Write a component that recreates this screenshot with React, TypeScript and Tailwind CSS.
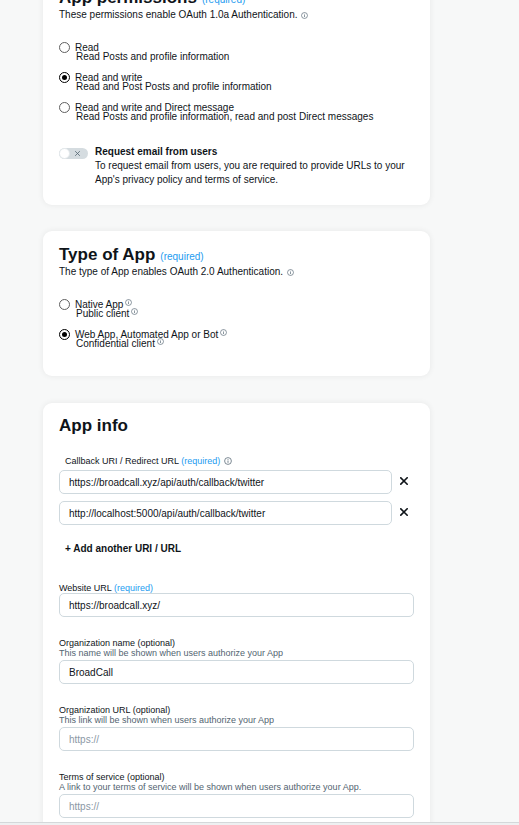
import type { ReactNode } from "react"

function Info({ size = 7 }: { size?: number }) {
  return (
    <svg width={size} height={size} viewBox="0 0 16 16" fill="none" className="shrink-0">
      <circle cx="8" cy="8" r="6.8" stroke="#536471" strokeWidth="1.5" />
      <rect x="7.2" y="7" width="1.6" height="4.6" fill="#536471" />
      <rect x="7.2" y="4.2" width="1.6" height="1.6" fill="#536471" />
    </svg>
  )
}

function Cross({ size = 8, color = "#0f1419", width = 2 }: { size?: number; color?: string; width?: number }) {
  return (
    <svg width={size} height={size} viewBox="0 0 10 10" fill="none" className="shrink-0">
      <path d="M1 1L9 9M9 1L1 9" stroke={color} strokeWidth={width} strokeLinecap="square" />
    </svg>
  )
}

function Radio({
  checked,
  label,
  desc,
  infos,
}: {
  checked?: boolean
  label: string
  desc: string
  infos?: boolean
}) {
  return (
    <div className="flex items-start gap-[5px]">
      <span
        className={
          checked
            ? "-mt-[1px] flex h-[11px] w-[11px] shrink-0 items-center justify-center rounded-full border-[1.5px] border-black bg-white"
            : "-mt-[1px] flex h-[11px] w-[11px] shrink-0 items-center justify-center rounded-full border border-[#5f5f5f] bg-white"
        }
      >
        {checked && <span className="h-[5px] w-[5px] rounded-full bg-black" />}
      </span>
      <div className="text-[10px] leading-[9px] text-[#0f1419]">
        <div className="flex items-start gap-[2px]">
          {label}
          {infos && (
            <span className="-mt-[1px]">
              <Info />
            </span>
          )}
        </div>
        <div className="flex items-start gap-[2px] pl-[1px]">
          {desc}
          {infos && (
            <span className="-mt-[1px]">
              <Info />
            </span>
          )}
        </div>
      </div>
    </div>
  )
}

function Card({ children, className }: { children: ReactNode; className: string }) {
  return (
    <section
      className={
        "w-[387px] rounded-[9px] bg-white px-4 shadow-[0_0_6px_rgba(0,0,0,0.07)] " + className
      }
    >
      {children}
    </section>
  )
}

function Heading({ title, required }: { title: string; required?: boolean }) {
  return (
    <div className="flex items-baseline gap-[5px]">
      <h2 className="text-[17px] font-bold leading-[20px] text-[#0f1419]">{title}</h2>
      {required && <span className="text-[10px] text-[#1d9bf0]">(required)</span>}
    </div>
  )
}

function Field({
  label,
  required,
  desc,
  value,
  placeholder,
  first,
}: {
  label: string
  required?: boolean
  desc?: string
  value?: string
  placeholder?: string
  first?: boolean
}) {
  return (
    <div className={first ? "mt-[28px]" : "mt-[21px]"}>
      <div className="text-[9px] font-medium leading-[10px] text-[#0f1419]">
        {label}{" "}
        {required ? (
          <span className="text-[#1d9bf0]">(required)</span>
        ) : (
          <span>(optional)</span>
        )}
      </div>
      {desc && <div className="text-[9px] leading-[11px] text-[#536471]">{desc}</div>}
      <div
        className={
          desc
            ? "mt-[1px] flex h-[24px] items-center rounded-[5px] border border-[#cfd9de] px-[9px] text-[10px]"
            : "flex h-[24px] items-center rounded-[5px] border border-[#cfd9de] px-[9px] text-[10px]"
        }
      >
        {value ? (
          <span className="text-[#0f1419]">{value}</span>
        ) : (
          <span className="text-[#8b98a5]">{placeholder}</span>
        )}
      </div>
    </div>
  )
}

export default function App() {
  return (
    <div className="flex h-[825px] flex-col overflow-hidden bg-[#f7f8f8] font-['Liberation_Sans',Arial,sans-serif]">
      <div className="flex-1 overflow-hidden pl-[43px]">
        {/* App permissions */}
        <Card className="-mt-[26px] pt-[14px] pb-[18px]">
          <Heading title="App permissions" required />
          <div className="mt-[1px] flex items-center gap-[4px] text-[10px] leading-[12px] text-[#0f1419]">
            These permissions enable OAuth 1.0a Authentication.
            <Info />
          </div>
          <div className="mt-[22px] flex flex-col gap-[12px]">
            <Radio label="Read" desc="Read Posts and profile information" />
            <Radio checked label="Read and write" desc="Read and Post Posts and profile information" />
            <Radio
              label="Read and write and Direct message"
              desc="Read Posts and profile information, read and post Direct messages"
            />
          </div>
          <div className="mt-[24px] flex items-start gap-[7px]">
            <div className="mt-[3px] flex h-[11px] w-[29px] shrink-0 items-center rounded-full bg-[#d5dce0]">
              <span className="h-[11px] w-[11px] rounded-full border border-[#e3e8eb] bg-white" />
              <span className="ml-[5px]">
                <Cross size={5} color="#536471" width={1.6} />
              </span>
            </div>
            <div className="text-[10px] leading-[14px] text-[#0f1419]">
              <div className="font-bold">Request email from users</div>
              <div>
                To request email from users, you are required to provide URLs to your
                <br />
                App's privacy policy and terms of service.
              </div>
            </div>
          </div>
        </Card>

        {/* Type of App */}
        <Card className="mt-[26px] pt-[14px] pb-[28px]">
          <Heading title="Type of App" required />
          <div className="mt-[1px] flex items-center gap-[4px] text-[10px] leading-[12px] text-[#0f1419]">
            The type of App enables OAuth 2.0 Authentication.
            <Info />
          </div>
          <div className="mt-[22px] flex flex-col gap-[12px]">
            <Radio label="Native App" desc="Public client" infos />
            <Radio checked label="Web App, Automated App or Bot" desc="Confidential client" infos />
          </div>
        </Card>

        {/* App info */}
        <Card className="mt-[27px] pt-[13px] pb-6">
          <Heading title="App info" />
          <div className="mt-[20px] flex items-center gap-[4px] pl-[6px] text-[9px] font-medium leading-[10px] text-[#0f1419]">
            <span>
              Callback URI / Redirect URL <span className="text-[#1d9bf0]">(required)</span>
            </span>
            <Info size={8} />
          </div>
          <div className="mt-[4px] flex flex-col gap-[7px]">
            {[
              "https://broadcall.xyz/api/auth/callback/twitter",
              "http://localhost:5000/api/auth/callback/twitter",
            ].map((url) => (
              <div key={url} className="flex items-start gap-[8px]">
                <div className="flex h-[24px] w-[333px] items-center rounded-[5px] border border-[#cfd9de] px-[9px] text-[10px] text-[#0f1419]">
                  {url}
                </div>
                <span className="mt-[7px]">
                  <Cross />
                </span>
              </div>
            ))}
          </div>
          <div className="mt-[18px] pl-[6px] text-[10px] font-bold leading-[12px] text-[#0f1419]">
            + Add another URI / URL
          </div>
          <Field first label="Website URL" required value="https://broadcall.xyz/" />
          <Field
            label="Organization name"
            desc="This name will be shown when users authorize your App"
            value="BroadCall"
          />
          <Field
            label="Organization URL"
            desc="This link will be shown when users authorize your App"
            placeholder="https://"
          />
          <Field
            label="Terms of service"
            desc="A link to your terms of service will be shown when users authorize your App."
            placeholder="https://"
          />
        </Card>
      </div>
      <div className="h-[3px] shrink-0 border-t border-[#d4d8da] bg-[#eef0f1]" />
    </div>
  )
}
